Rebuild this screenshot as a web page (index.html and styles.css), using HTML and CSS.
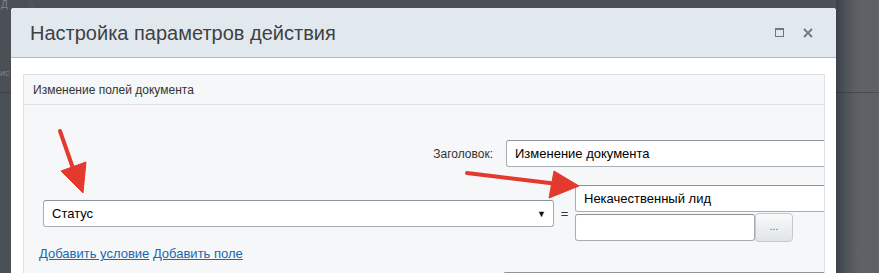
FILE: index.html
```html
<!DOCTYPE html>
<html lang="ru">
<head>
<meta charset="utf-8">
<title>Настройка параметров действия</title>
<link rel="stylesheet" href="styles.css">
</head>
<body>
<div class="backdrop-text bt-1">Д</div>
<div class="backdrop-text bt-2">☆</div>
<div class="backdrop-text bt-3">ис</div>
<div class="dialog">
  <div class="dialog-head">
    <div class="dialog-title">Настройка параметров действия</div>
    <div class="dialog-tools">
      <span class="tool-max"></span>
      <svg class="tool-close" width="10" height="10" viewBox="0 0 10 10"><path d="M1 1L9 9M9 1L1 9" stroke="#6f7882" stroke-width="1.8" fill="none"/></svg>
    </div>
  </div>
  <div class="dialog-body">
    <div class="panel">
      <div class="panel-head">Изменение полей документа</div>
      <div class="panel-body">
        <div class="row-title">
          <div class="label">Заголовок:</div>
          <div class="field wide">Изменение документа</div>
        </div>
        <div class="row-cond">
          <div class="select"><span>Статус</span><span class="caret">▼</span></div>
          <div class="eq">=</div>
          <div class="values">
            <div class="field wide">Некачественный лид</div>
            <div class="value-line">
              <div class="field short"></div>
              <div class="btn-dots">...</div>
            </div>
          </div>
        </div>
        <div class="links"><a href="#">Добавить условие</a> <a href="#">Добавить поле</a></div>
        <div class="row-next">
          <div class="field wide"></div>
        </div>
      </div>
    </div>
  </div>
</div>
<svg class="arrows" width="879" height="273" viewBox="0 0 879 273">
  <g fill="#e43a2d" stroke="#e43a2d">
    <line x1="60" y1="131" x2="75" y2="174" stroke-width="4" stroke-linecap="round"/>
    <polygon points="61,171 86,162 83,193" stroke-width="1" stroke-linejoin="round"/>
    <line x1="467" y1="173" x2="558" y2="184" stroke-width="4" stroke-linecap="round"/>
    <polygon points="554,171 549,198 579,186" stroke-width="1" stroke-linejoin="round"/>
  </g>
</svg>
</body>
</html>
```
FILE: styles.css
```css
html, body {
  margin: 0;
  padding: 0;
}
body {
  width: 879px;
  height: 273px;
  overflow: hidden;
  position: relative;
  font-family: "Liberation Sans", Arial, sans-serif;
  background:
    linear-gradient(to bottom, transparent 92px, rgba(0,0,0,0.22) 92px, rgba(0,0,0,0.22) 93px, transparent 93px),
    linear-gradient(to right, #4b4f56 0, #4b4f56 836px, #3b4149 836px, #4f535a 846px, #5e6066 858px, #606167 879px);
  padding: 8px 0 0 11px;
  box-sizing: border-box;
}
.backdrop-text {
  position: absolute;
  color: #80848a;
  font-size: 10px;
  line-height: 10px;
}
.bt-1 { left: 1px; top: 0; }
.bt-2 { left: 27px; top: 0; color: #6a6e74; }
.bt-3 { left: 0; top: 68px; font-size: 9px; }

.dialog {
  width: 825px;
  height: 300px;
  background: #fff;
  border-radius: 3px 3px 0 0;
  overflow: hidden;
  position: relative;
}
.dialog-head {
  height: 49px;
  background: #e2e9ee;
  border-bottom: 1px solid #b4b7ba;
  display: flex;
  align-items: center;
  padding: 0 0 0 19px;
}
.dialog-title {
  flex: 1;
  font-size: 20px;
  color: #3f4145;
  padding-top: 1px;
}
.dialog-tools {
  display: flex;
  align-items: center;
  gap: 19px;
  padding-right: 23px;
}
.tool-max {
  width: 7px;
  height: 6px;
  border: 1px solid #6f7882;
  border-top-width: 2px;
}
.tool-close { display: block; }

.dialog-body {
  padding: 16px 11px 0 12px;
}
.panel {
  background: #f5f7f8;
  border: 1px solid #dce3e8;
  border-right: 0;
  height: 230px;
  overflow: hidden;
  position: relative;
}
.panel::after {
  content: "";
  position: absolute;
  right: 0;
  top: 0;
  bottom: 0;
  width: 1px;
  background: #dce3e8;
}
.panel-head {
  height: 29px;
  border-bottom: 1px solid #dce3e8;
  font-size: 12px;
  color: #333;
  display: flex;
  align-items: center;
  padding-left: 9px;
}
.panel-body {
  padding-top: 35px;
}
.field {
  height: 27px;
  box-sizing: border-box;
  background: #fff;
  border: 1px solid #a9acb0;
  border-top-color: #8f9398;
  border-radius: 3px;
  font-size: 13px;
  color: #000;
  display: flex;
  align-items: center;
  padding-left: 8px;
  flex-shrink: 0;
}
.wide { width: 420px; }
.row-title {
  display: flex;
  align-items: center;
  gap: 13px;
}
.label {
  width: 469px;
  flex-shrink: 0;
  text-align: right;
  font-size: 12px;
  color: #333;
}
.row-cond {
  display: flex;
  align-items: center;
  margin-top: 18px;
  padding-left: 19px;
}
.select {
  width: 511px;
  height: 27px;
  flex-shrink: 0;
  box-sizing: border-box;
  background: #fff;
  border: 1px solid #a9acb0;
  border-top-color: #8f9398;
  border-radius: 3px;
  font-size: 13px;
  color: #000;
  display: flex;
  align-items: center;
  justify-content: space-between;
  padding: 0 7px 0 8px;
}
.caret {
  font-size: 9px;
  color: #111;
}
.eq {
  width: 21px;
  flex-shrink: 0;
  text-align: center;
  font-size: 13px;
  color: #333;
}
.values {
  display: flex;
  flex-direction: column;
  gap: 1px;
  flex-shrink: 0;
}
.value-line {
  display: flex;
  align-items: center;
}
.short { width: 180px; }
.btn-dots {
  width: 38px;
  height: 29px;
  flex-shrink: 0;
  box-sizing: border-box;
  border: 1px solid #c3c9cd;
  border-radius: 4px;
  background: linear-gradient(to bottom, #f8fafa, #dfe5e8);
  font-size: 10px;
  color: #555;
  display: flex;
  align-items: center;
  justify-content: center;
  padding-bottom: 2px;
}
.links {
  margin-top: 4px;
  padding-left: 15px;
  font-size: 13px;
}
.links a {
  color: #2067b0;
  text-decoration: underline;
}
.row-next {
  margin-top: 11px;
  padding-left: 479px;
}
.arrows {
  position: absolute;
  left: 0;
  top: 0;
  pointer-events: none;
}
```
